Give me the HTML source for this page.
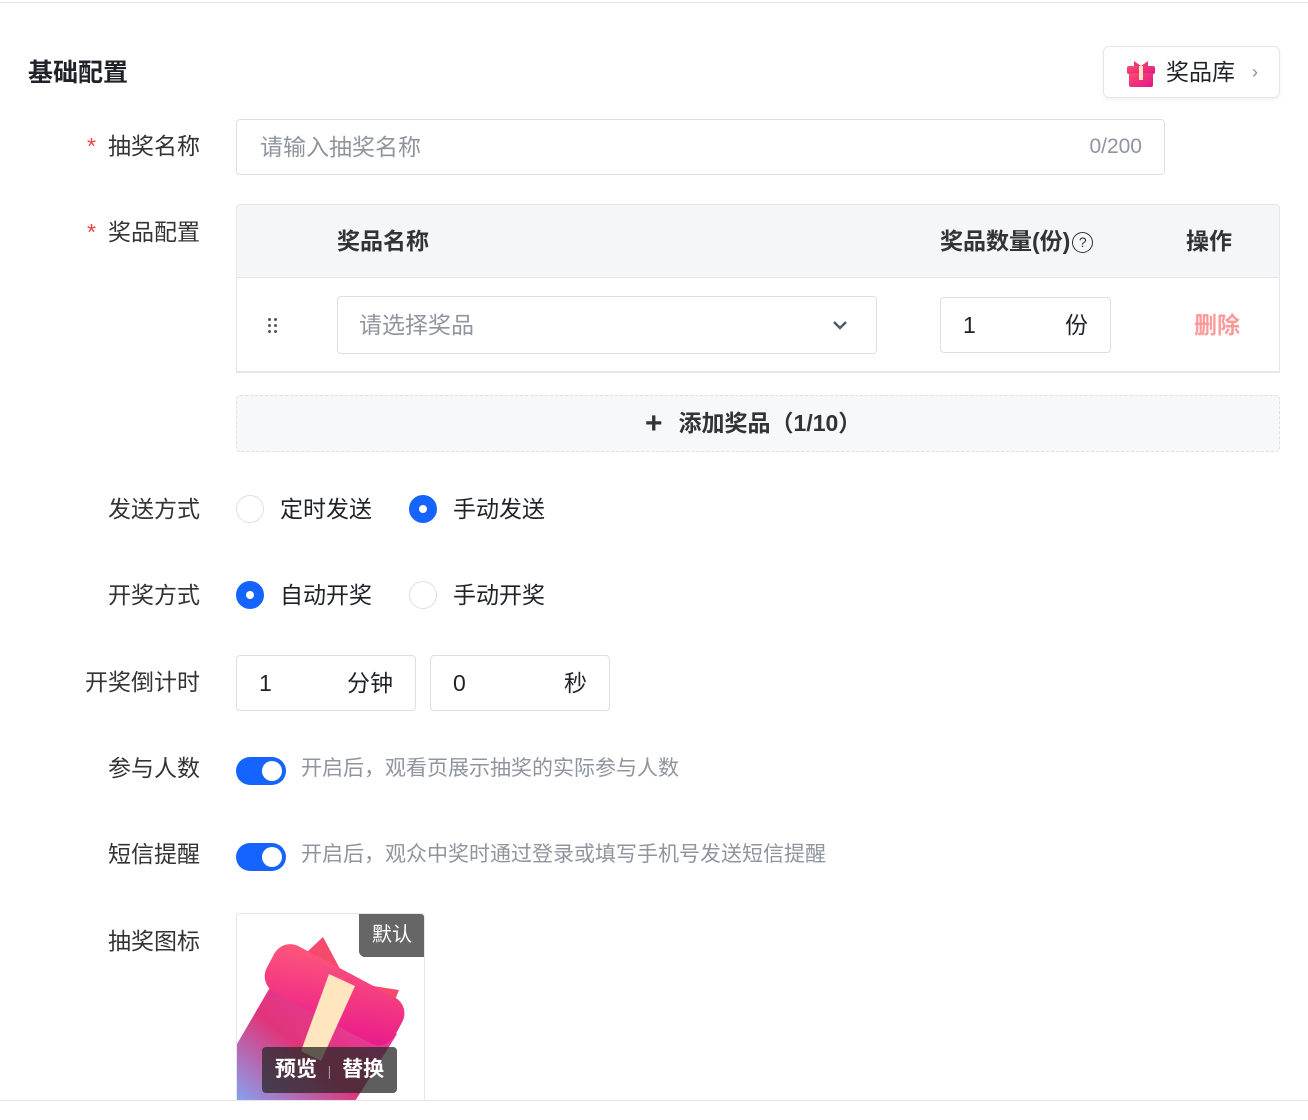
<!DOCTYPE html><html><head><meta charset="utf-8"><style>
*{box-sizing:border-box;margin:0;padding:0}
body{width:1308px;height:1120px;background:#fff;font-family:"Liberation Sans","Noto Sans CJK SC",sans-serif;color:#1f2329;position:relative;overflow:hidden;font-size:23px}
.a{position:absolute}
.lbl{position:absolute;right:1108px;font-size:23px;color:#333;line-height:30px;white-space:nowrap}
.req::before{content:"*";color:#f53f3f;margin-right:12px}
.box{position:absolute;border:1px solid #dcdfe6;border-radius:4px;background:#fff}
.radio{position:absolute;width:28px;height:28px;border-radius:50%;border:1px solid #dcdfe6;background:#fff}
.radio.on{background:#1664ff;border-color:#1664ff}
.radio.on::after{content:"";position:absolute;left:9px;top:9px;width:8px;height:8px;border-radius:50%;background:#fff}
.sw{position:absolute;width:50px;height:28px;border-radius:14px;background:#1664ff}
.sw::after{content:"";position:absolute;right:4px;top:4px;width:20px;height:20px;border-radius:50%;background:#fff}
.t{position:absolute;line-height:30px;white-space:nowrap}
.hint{color:#8f959e;font-size:21px}
.dot{position:absolute;width:3px;height:3px;background:#555;border-radius:50%}
</style></head><body>
<div class="a" style="left:0;top:2px;width:1308px;height:1px;background:#e5e6eb"></div>
<div class="t" style="left:28px;top:58px;font-size:25px;font-weight:bold">基础配置</div>
<div class="a" style="left:1103px;top:46px;width:177px;height:52px;border:1px solid #e5e6eb;border-radius:6px;box-shadow:0 2px 4px rgba(0,0,0,.06)">
 <svg class="a" style="left:22px;top:11px" width="30" height="30" viewBox="0 0 30 30"><defs><linearGradient id="g" x1="0" y1="0" x2="1" y2="1"><stop offset="0" stop-color="#ff4d6d"/><stop offset="1" stop-color="#e0148c"/></linearGradient></defs><path d="M8 3l7 5 7-5v6H8z" fill="#f0357a"/><rect x="1" y="8" width="28" height="8" rx="2" fill="url(#g)"/><rect x="3" y="15" width="24" height="14" rx="2" fill="url(#g)"/><rect x="13" y="8" width="4" height="14" fill="#ffe6bf"/></svg>
 <div class="t" style="left:62px;top:10px;font-size:23px">奖品库</div>
 <div class="t" style="left:148px;top:10px;font-size:18px;color:#86909c">›</div>
</div>

<div class="lbl req" style="top:131px">抽奖名称</div>
<div class="box" style="left:236px;top:119px;width:929px;height:56px"><div class="t" style="left:23px;top:12px;color:#8f959e">请输入抽奖名称</div><div class="t" style="right:22px;top:12px;color:#8f959e;font-size:21px">0/200</div></div>

<div class="lbl req" style="top:217px">奖品配置</div>
<div class="a" style="left:236px;top:204px;width:1044px;height:169px;border:1px solid #e5e6eb;border-radius:4px 4px 0 0;overflow:hidden">
 <div class="a" style="left:0;top:0;width:1044px;height:73px;background:#f5f6f8;border-bottom:1px solid #e5e6eb"></div>
 <div class="t" style="left:100px;top:21px;font-weight:bold;color:#333">奖品名称</div>
 <div class="t" style="left:703px;top:21px;font-weight:bold;color:#333">奖品数量(份)<span style="display:inline-block;width:21px;height:21px;border:1.5px solid #333;border-radius:50%;font-size:14px;line-height:18px;text-align:center;vertical-align:2px;margin-left:2px;font-weight:normal">?</span></div>
 <div class="t" style="left:949px;top:21px;font-weight:bold;color:#333">操作</div>
 <div class="dot" style="left:31px;top:113px"></div><div class="dot" style="left:37px;top:113px"></div>
 <div class="dot" style="left:31px;top:119px"></div><div class="dot" style="left:37px;top:119px"></div>
 <div class="dot" style="left:31px;top:125px"></div><div class="dot" style="left:37px;top:125px"></div>
 <div class="box" style="left:100px;top:91px;width:540px;height:58px"><div class="t" style="left:21px;top:13px;color:#8f959e">请选择奖品</div><svg class="a" style="left:494px;top:22px" width="16" height="12" viewBox="0 0 16 12"><path d="M2 3l6 6 6-6" stroke="#4e5969" stroke-width="2.4" fill="none"/></svg></div>
 <div class="box" style="left:703px;top:92px;width:171px;height:56px"><div class="t" style="left:22px;top:12px">1</div><div class="t" style="right:22px;top:12px">份</div></div>
 <div class="t" style="left:957px;top:105px;color:#f99;font-weight:bold">删除</div>
</div>
<div class="a" style="left:236px;top:371px;width:1044px;height:2px;background:#e5e6eb"></div>
<div class="a" style="left:236px;top:395px;width:1044px;height:57px;border:1px dashed #dcdfe6;border-radius:4px;background:#f7f8fa">
 <div class="t" style="left:408px;top:12px;font-weight:bold;color:#333"><span style="font-size:30px;vertical-align:-2px;margin-right:16px">+</span>添加奖品（1/10）</div>
</div>

<div class="lbl" style="top:494px">发送方式</div>
<div class="radio" style="left:236px;top:495px"></div><div class="t" style="left:280px;top:494px">定时发送</div>
<div class="radio on" style="left:409px;top:495px"></div><div class="t" style="left:453px;top:494px">手动发送</div>

<div class="lbl" style="top:580px">开奖方式</div>
<div class="radio on" style="left:236px;top:581px"></div><div class="t" style="left:280px;top:580px">自动开奖</div>
<div class="radio" style="left:409px;top:581px"></div><div class="t" style="left:453px;top:580px">手动开奖</div>

<div class="lbl" style="top:667px">开奖倒计时</div>
<div class="box" style="left:236px;top:655px;width:180px;height:56px"><div class="t" style="left:22px;top:12px">1</div><div class="t" style="right:22px;top:12px">分钟</div></div>
<div class="box" style="left:430px;top:655px;width:180px;height:56px"><div class="t" style="left:22px;top:12px">0</div><div class="t" style="right:22px;top:12px">秒</div></div>

<div class="lbl" style="top:753px">参与人数</div>
<div class="sw" style="left:236px;top:757px"></div><div class="t hint" style="left:301px;top:754px">开启后，观看页展示抽奖的实际参与人数</div>

<div class="lbl" style="top:839px">短信提醒</div>
<div class="sw" style="left:236px;top:843px"></div><div class="t hint" style="left:301px;top:840px">开启后，观众中奖时通过登录或填写手机号发送短信提醒</div>

<div class="lbl" style="top:926px">抽奖图标</div>
<div class="a" style="left:236px;top:913px;width:189px;height:187px;border:1px solid #e5e6eb;border-bottom:none;border-radius:4px 4px 0 0;overflow:hidden">
 <svg class="a" style="left:0;top:0" width="189" height="200" viewBox="0 0 189 200"><defs><linearGradient id="b" x1="0" y1="1" x2="1" y2="0"><stop offset="0" stop-color="#7ab0ff"/><stop offset=".45" stop-color="#e0357a"/><stop offset="1" stop-color="#f03cb0"/></linearGradient><linearGradient id="c" x1="0" y1="0" x2="1" y2="1"><stop offset="0" stop-color="#ff5a7a"/><stop offset="1" stop-color="#e8188c"/></linearGradient></defs>
 <path d="M70 38l16-15 24 45 52 8-12 30z" fill="#f54a6c"/>
 <path d="M35 70L0 130v70h110l50-80z" fill="url(#b)"/>
 <rect x="25" y="55" width="145" height="52" rx="18" transform="rotate(28 98 81)" fill="url(#c)"/>
 <path d="M92 60l26 12-34 75-20-10z" fill="#ffe6bf"/>
 </svg>
 <div class="a" style="left:122px;top:0;width:66px;height:43px;background:#666;border-radius:0 0 0 6px;color:#fff;font-size:20px;line-height:43px;text-align:center">默认</div>
 <div class="a" style="left:25px;top:133px;width:135px;height:46px;background:rgba(40,40,40,.75);border-radius:4px;color:#fff;font-size:21px;font-weight:bold;line-height:46px;text-align:center">预览 <span style="font-weight:normal;color:#999;font-size:14px;margin:0 5px">|</span> 替换</div>
</div>
<div class="a" style="left:0;top:1100px;width:1308px;height:1px;background:#e5e6eb"></div>
</body></html>
